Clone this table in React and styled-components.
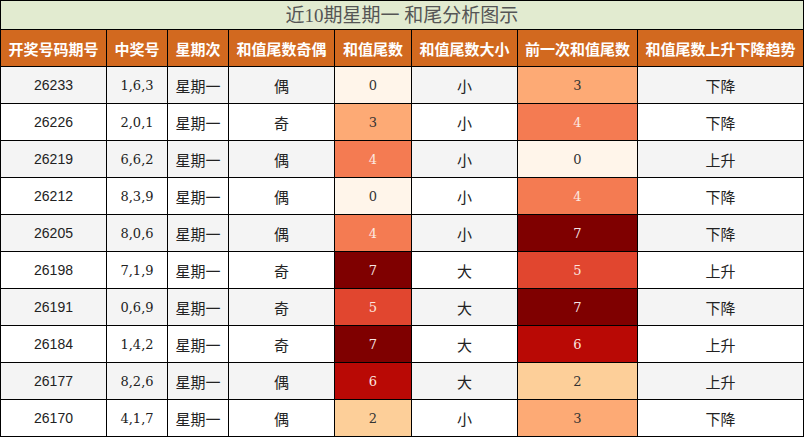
import React from "react";
import styled, { createGlobalStyle } from "styled-components";

const Global = createGlobalStyle`
  html, body { margin: 0; padding: 0; background: #fff; }
  body { font-family: "Noto Sans CJK SC", sans-serif; }
`;

const Table = styled.div`
  display: grid;
  grid-template-columns: 105px 60px 60px 105px 76px 105px 119px 165px;
  grid-template-rows: 28px;
  grid-auto-rows: 36px;
  gap: 1px;
  padding: 1px;
  background: #000;
  width: 804px;
  box-sizing: border-box;
`;

const Title = styled.div`
  grid-column: 1 / -1;
  background: #e2ebd0;
  color: #555;
  font-family: "Liberation Serif", "Noto Sans CJK SC", serif;
  font-size: 19px;
  display: flex;
  align-items: center;
  justify-content: center;
  line-height: 1;
`;

const Head = styled.div`
  background: #d2691f;
  color: #fff;
  font-weight: 700;
  font-size: 15px;
  font-family: "Noto Sans CJK SC", sans-serif;
  display: flex;
  align-items: center;
  justify-content: center;
  white-space: nowrap;
`;

const Cell = styled.div`
  background: ${(p) => p.$bg || (p.$odd ? "#f4f4f4" : "#ffffff")};
  color: ${(p) => p.$fg || "#222"};
  font-family: ${(p) =>
    p.$sans
      ? '"Liberation Sans", sans-serif'
      : p.$cjk
      ? '"Noto Sans CJK SC", sans-serif'
      : '"DejaVu Serif", "Noto Sans CJK SC", serif'};
  font-size: ${(p) => (p.$cjk ? "15px" : p.$sans ? "14px" : "13px")};
  display: flex;
  align-items: center;
  justify-content: center;
  white-space: nowrap;
`;

const heat = {
  0: ["#fff5ea", "#333"],
  1: ["#fee6c8", "#333"],
  2: ["#fdcf99", "#333"],
  3: ["#fdaa75", "#333"],
  4: ["#f47b52", "#fde8e0"],
  5: ["#e1462f", "#fde8e0"],
  6: ["#b90905", "#fde8e0"],
  7: ["#7f0000", "#f6e4e4"],
};

const headers = [
  "开奖号码期号",
  "中奖号",
  "星期次",
  "和值尾数奇偶",
  "和值尾数",
  "和值尾数大小",
  "前一次和值尾数",
  "和值尾数上升下降趋势",
];

const rows = [
  ["26233", "1,6,3", "偶", 0, "小", 3, "下降"],
  ["26226", "2,0,1", "奇", 3, "小", 4, "下降"],
  ["26219", "6,6,2", "偶", 4, "小", 0, "上升"],
  ["26212", "8,3,9", "偶", 0, "小", 4, "下降"],
  ["26205", "8,0,6", "偶", 4, "小", 7, "下降"],
  ["26198", "7,1,9", "奇", 7, "大", 5, "上升"],
  ["26191", "0,6,9", "奇", 5, "大", 7, "下降"],
  ["26184", "1,4,2", "奇", 7, "大", 6, "上升"],
  ["26177", "8,2,6", "偶", 6, "大", 2, "上升"],
  ["26170", "4,1,7", "偶", 2, "小", 3, "下降"],
];

export default function App() {
  return (
    <>
      <Global />
      <Table>
        <Title>近10期星期一 和尾分析图示</Title>
        {headers.map((h) => (
          <Head key={h}>{h}</Head>
        ))}
        {rows.map((r, i) => {
          const odd = i % 2 === 0;
          const [a, b, c, d, e, f, g] = r;
          return (
            <React.Fragment key={a}>
              <Cell $odd={odd} $sans>{a}</Cell>
              <Cell $odd={odd}>{b}</Cell>
              <Cell $odd={odd} $cjk>星期一</Cell>
              <Cell $odd={odd} $cjk>{c}</Cell>
              <Cell $bg={heat[d][0]} $fg={heat[d][1]}>{d}</Cell>
              <Cell $odd={odd} $cjk>{e}</Cell>
              <Cell $bg={heat[f][0]} $fg={heat[f][1]}>{f}</Cell>
              <Cell $odd={odd} $cjk>{g}</Cell>
            </React.Fragment>
          );
        })}
      </Table>
    </>
  );
}
